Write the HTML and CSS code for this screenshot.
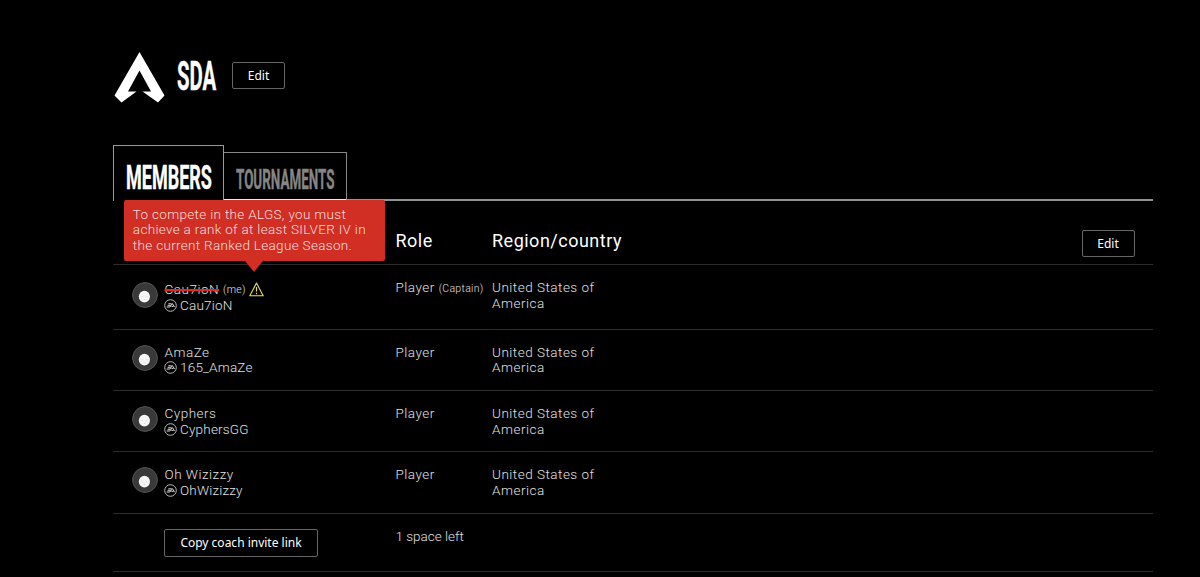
FILE: index.html
```
<!DOCTYPE html>
<html lang="en">
<head>
    <meta charset="UTF-8">
    <meta name="viewport" content="width=device-width, initial-scale=1.0">
    <title>SDA</title>
    <link rel="stylesheet" href="styles.css">
</head>
<body>
    <svg class="defs" width="0" height="0">
        <symbol id="avatar" viewBox="0 0 26 26">
            <circle cx="13" cy="13" r="12.4" fill="#393939" stroke="#555"/>
            <ellipse cx="12.4" cy="14.6" rx="5.6" ry="5.8" fill="#f6f6f6"/>
            <path d="M9.5 14.7h1.5M13.8 14.7h1.5M11.7 17.5h1.5" stroke="#ccc" stroke-width=".7"/>
        </symbol>
        <symbol id="ea" viewBox="0 0 13 13">
            <circle cx="6.5" cy="6.5" r="5.8" fill="none" stroke="#bbb" stroke-width="1"/>
            <path d="M4.4 4.8h3.2M3.6 6.3h3M2.6 8h3.3l2.5-3.4 2.2 3.5M7.5 7.4h2" fill="none" stroke="#ddd" stroke-width="1"/>
        </symbol>
    </svg>
    <div class="container">
        <div class="team">
            <svg class="logo" viewBox="0 0 50 51">
                <path d="M25 0L50 43.5L43.5 50.500L28 39.5H36.5L25 18.5L13.5 39.5H22L7 50.5L0 43.5Z" fill="#fff"/>
            </svg>
            <div class="team-name"><span class="condensed">SDA</span></div>
            <button>Edit</button>
        </div>
        <div class="tabs">
            <div class="tab active"><span class="condensed">MEMBERS</span></div>
            <div class="tab"><span class="condensed">TOURNAMENTS</span></div>
            <div class="tab-line"></div>
        </div>
        <div class="row head">
            <div></div>
            <div></div>
            <div>Role</div>
            <div class="region">Region/country</div>
            <button>Edit</button>
        </div>
        <div class="row first">
            <svg class="avatar"><use href="#avatar"/></svg>
            <div class="member">
                <div class="name"><span class="invalid">Cau7ioN</span> <small>(me)</small>
                    <span class="warning">
                        <svg width="15" height="15" viewBox="0 0 15 15" fill="none" stroke="#e5dc6a">
                            <path d="M7.5 1L14.2 13.8H.8Z" stroke-width="1.1" stroke-linejoin="round"/>
                            <path d="M7.5 5v4.6M7.5 10.8v1.4" stroke-width="1.2"/>
                        </svg>
                        <span class="tooltip">To compete in the ALGS, you must<br>achieve a rank of at least SILVER IV in<br>the current Ranked League Season.</span>
                    </span>
                </div>
                <div class="account"><svg><use href="#ea"/></svg>Cau7ioN</div>
            </div>
            <div>Player <small>(Captain)</small></div>
            <div class="region">United States of<br>America</div>
        </div>
        <div class="row">
            <svg class="avatar"><use href="#avatar"/></svg>
            <div class="member">
                <div class="name">AmaZe</div>
                <div class="account"><svg><use href="#ea"/></svg>165_AmaZe</div>
            </div>
            <div>Player</div>
            <div class="region">United States of<br>America</div>
        </div>
        <div class="row">
            <svg class="avatar"><use href="#avatar"/></svg>
            <div class="member">
                <div class="name">Cyphers</div>
                <div class="account"><svg><use href="#ea"/></svg>CyphersGG</div>
            </div>
            <div>Player</div>
            <div class="region">United States of<br>America</div>
        </div>
        <div class="row">
            <svg class="avatar"><use href="#avatar"/></svg>
            <div class="member">
                <div class="name">Oh Wizizzy</div>
                <div class="account"><svg><use href="#ea"/></svg>OhWizizzy</div>
            </div>
            <div>Player</div>
            <div class="region">United States of<br>America</div>
        </div>
        <div class="row last">
            <div></div>
            <div><button class="invite">Copy coach invite link</button></div>
            <div class="space">1 space left</div>
        </div>
    </div>
</body>
</html>
```
FILE: styles.css
```
* {
    box-sizing: border-box;
}
body {
    margin: 0;
    background: #000;
    color: #e0e0e0;
    font-family: Roboto, "Liberation Sans", sans-serif;
    font-weight: 300;
    font-size: 13.5px;
    line-height: 15.6px;
    letter-spacing: 0.5px;
    overflow: hidden;
}
.defs {
    display: block;
}
.container {
    width: 1040px;
    margin-left: 113px;
    padding-top: 52px;
}
button {
    width: 53px;
    height: 27px;
    padding: 0;
    background: #000;
    border: 1px solid #666;
    border-radius: 2px;
    color: #fff;
    font-family: "Noto Sans", sans-serif;
    font-size: 12px;
}
.team {
    display: flex;
    height: 93px;
    align-items: flex-start;
    padding-left: 1px;
}
.logo {
    width: 51px;
    height: 51px;
}
.team-name {
    width: 39px;
    margin: 10px 16px 0 12px;
    font-size: 40px;
    line-height: 30px;
    color: #fff;
}
.team-name .condensed {
    transform: scaleX(0.51);
}
.team button {
    margin-top: 10px;
}
.condensed {
    display: inline-block;
    font-weight: 700;
    letter-spacing: 0;
    white-space: nowrap;
    transform-origin: left;
    -webkit-text-stroke: 0.4px currentColor;
}
.tabs {
    display: flex;
    align-items: flex-end;
    height: 56px;
}
.tab {
    width: 123px;
    height: 49px;
    padding: 15px 0 0 12px;
    border: 1px solid #888;
    border-left: 0;
    border-bottom: 2px solid #eee;
    color: #858585;
    font-size: 28px;
    line-height: 24px;
}
.tab .condensed {
    transform: scaleX(0.479);
}
.tab.active {
    width: 111px;
    height: 56px;
    padding: 18px 0 0 12px;
    border: 1px solid #999;
    border-bottom: 0;
    color: #fff;
    font-size: 34px;
    line-height: 26px;
}
.tab.active .condensed {
    transform: scaleX(0.53);
}
.tab-line {
    flex: 1;
    height: 2px;
    background: #909494;
}
.row {
    display: grid;
    grid-template-columns: 33px 231px 96.5px 140px;
    height: 61.4px;
    padding: 15px 18px 0 18.5px;
    border-bottom: 1px solid #2c2c2c;
}
.row.head {
    grid-template-columns: 33px 231px 96.5px 1fr 53px;
    height: 64px;
    padding: 29px 18.5px 0 18.5px;
    font-size: 18px;
    line-height: 21px;
    font-weight: 400;
    color: #fff;
}
.row.first {
    height: 64.6px;
}
.row.last {
    height: 58px;
    padding-top: 15px;
}
.avatar {
    width: 26px;
    height: 26px;
}
.first .avatar {
    margin-top: 2px;
}
.first .member {
    padding-top: 1px;
}
.member svg {
    flex: none;
}
.name {
    display: flex;
    align-items: center;
    gap: 4px;
    height: 15.6px;
}
.first .name {
    height: 16.6px;
}
small {
    font-size: 10.5px;
    letter-spacing: 0.3px;
}
.invalid {
    text-decoration: line-through 2px #e5291c;
}
.account {
    display: flex;
    align-items: center;
    gap: 3px;
    letter-spacing: 0.2px;
}
.account svg {
    width: 13px;
    height: 13px;
    margin-left: -0.5px;
}
.warning {
    position: relative;
    height: 15px;
    margin-left: -1px;
}
.warning svg {
    display: block;
}
.tooltip {
    position: absolute;
    left: -125px;
    bottom: 36px;
    width: 261px;
    height: 61px;
    padding: 7px 0 0 9px;
    background: #d12e24;
    border-radius: 2px;
    color: #f9dedc;
    letter-spacing: 0.32px;
    white-space: nowrap;
}
.tooltip::after {
    content: "";
    position: absolute;
    top: 61px;
    left: 121px;
    border: 9px solid transparent;
    border-top: 11px solid #d12e24;
    border-bottom: 0;
}
.invite {
    width: 154px;
    height: 28px;
    margin-left: -0.5px;
}
.space {
    letter-spacing: 0;
}
```
